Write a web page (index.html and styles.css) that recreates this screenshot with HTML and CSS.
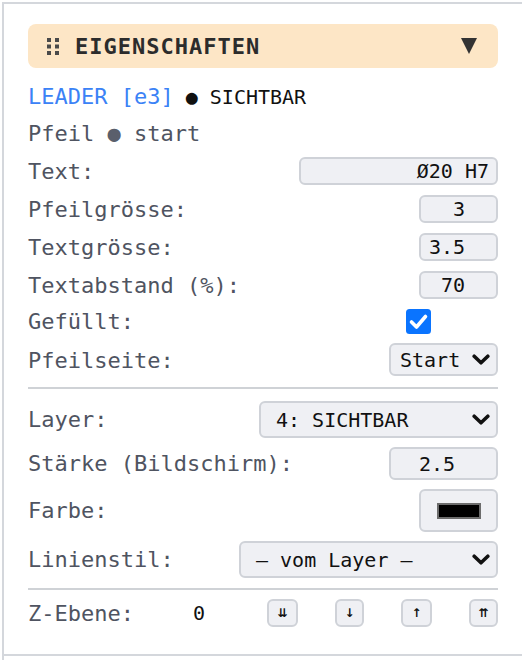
FILE: index.html
```html
<!DOCTYPE html>
<html lang="de">
<head>
<meta charset="utf-8">
<title>Eigenschaften</title>
<link rel="stylesheet" href="styles.css">
</head>
<body>
<div class="sidebar">
  <section class="panel">
    <header class="panel-head">
      <svg class="grip" width="12" height="17" viewBox="0 0 12 17" aria-hidden="true">
        <rect x="0" y="0" width="4" height="4"/><rect x="8" y="0" width="4" height="4"/>
        <rect x="0" y="6.5" width="4" height="4"/><rect x="8" y="6.5" width="4" height="4"/>
        <rect x="0" y="13" width="4" height="4"/><rect x="8" y="13" width="4" height="4"/>
      </svg>
      <h2 class="panel-title">EIGENSCHAFTEN</h2>
      <svg class="caret" width="16" height="16" viewBox="0 0 16 16" aria-hidden="true"><polygon points="0,0 16,0 8,16"/></svg>
    </header>

    <div class="group group-top">
      <div class="entity"><span class="entity-type">LEADER [e3]</span> <span class="entity-layer">● SICHTBAR</span></div>
      <div class="sub">Pfeil <span class="sub-dot">●</span> start</div>
      <div class="row"><span class="label">Text:</span><input class="field field-text" value="Ø20 H7"></div>
      <div class="row"><span class="label">Pfeilgrösse:</span><input class="field field-num" value="3"></div>
      <div class="row"><span class="label">Textgrösse:</span><input class="field field-num" value="3.5"></div>
      <div class="row"><span class="label">Textabstand (%):</span><input class="field field-num" value="70"></div>
      <div class="row row-check"><span class="label">Gefüllt:</span>
        <span class="check"><svg width="25" height="25" viewBox="0 0 25 25" aria-hidden="true"><rect width="25" height="25" rx="3.5" fill="#0a74ff"/><path d="M5.5 13 L10.5 18 L19.5 7.5" fill="none" stroke="#fff" stroke-width="3.6" stroke-linecap="round" stroke-linejoin="round"/></svg></span>
      </div>
      <div class="row"><span class="label">Pfeilseite:</span>
        <div class="select select-side"><span>Start</span><svg class="chev" width="18" height="11" viewBox="0 0 18 11" aria-hidden="true"><polyline points="2.2,2.2 9,8.8 15.8,2.2"/></svg></div>
      </div>
    </div>

    <hr class="divider divider-first">

    <div class="group group-mid">
      <div class="row"><span class="label">Layer:</span>
        <div class="select select-layer"><span>4: SICHTBAR</span><svg class="chev" width="18" height="11" viewBox="0 0 18 11" aria-hidden="true"><polyline points="2.2,2.2 9,8.8 15.8,2.2"/></svg></div>
      </div>
      <div class="row"><span class="label">Stärke (Bildschirm):</span><input class="field field-wide" value="2.5"></div>
      <div class="row"><span class="label">Farbe:</span><div class="color"><span class="swatch"></span></div></div>
      <div class="row"><span class="label">Linienstil:</span>
        <div class="select select-style"><span>— vom Layer —</span><svg class="chev" width="18" height="11" viewBox="0 0 18 11" aria-hidden="true"><polyline points="2.2,2.2 9,8.8 15.8,2.2"/></svg></div>
      </div>
    </div>

    <hr class="divider">

    <div class="row zrow">
      <span class="label">Z-Ebene:</span>
      <span class="zval">0</span>
      <div class="zbtns">
        <button class="zbtn zbtn-a">⇊</button>
        <button class="zbtn zbtn-b">↓</button>
        <button class="zbtn zbtn-a">↑</button>
        <button class="zbtn zbtn-b">⇈</button>
      </div>
    </div>
  </section>
</div>
</body>
</html>
```

FILE: styles.css
```css
html, body {
  margin: 0;
  padding: 0;
  background: #ffffff;
}

body {
  font-family: "DejaVu Sans Mono", "Liberation Mono", monospace;
  color: #111;
}

.sidebar {
  margin-left: 2px;
  border-left: 2px solid #d4d7dc;
  min-height: 660px;
}

.panel {
  margin-top: 2px;
  border-top: 2px solid #d4d7dc;
  border-bottom: 2px solid #d4d7dc;
  padding: 20px 24px 27px 24px;
}

.panel-head {
  display: flex;
  align-items: center;
  height: 44px;
  box-sizing: border-box;
  background: #fde6c6;
  border-radius: 8px;
  padding: 0 21px 0 19px;
}

.grip {
  fill: #4a4a4a;
  flex: none;
  margin-right: 16px;
}

.panel-title {
  margin: 0;
  font-size: 22px;
  font-weight: bold;
  letter-spacing: 1px;
  color: #2c2c2c;
  flex: 1;
}

.caret {
  fill: #333;
  flex: none;
}

.group {
  display: flex;
  flex-direction: column;
}

.group-top {
  margin-top: 16px;
  gap: 10px;
}

.group-mid {
  margin-top: 12px;
  gap: 9px;
}

.entity {
  height: 26px;
  line-height: 26px;
  font-size: 20px;
  color: #111;
  white-space: pre;
}

.entity-type {
  font-size: 22px;
  color: #3b82f6;
}

.sub {
  height: 26px;
  line-height: 26px;
  font-size: 22px;
  color: #4f5461;
  margin-top: 1px;
}

.sub-dot {
  color: #5a5f6c;
}

.row {
  display: flex;
  align-items: center;
  justify-content: space-between;
}

.label {
  font-size: 22px;
  color: #4f5461;
  white-space: pre;
}

.field {
  box-sizing: border-box;
  height: 28px;
  margin: 0;
  border: 2px solid #cfd2d8;
  border-radius: 6px;
  background: #eff0f4;
  font-family: "DejaVu Sans Mono", monospace;
  font-size: 20px;
  color: #111;
  text-align: right;
  padding: 0;
  outline: none;
}

.field-text {
  width: 199px;
  padding-right: 7px;
}

.field-num {
  width: 79px;
  padding-right: 31px;
}

.field-wide {
  width: 109px;
  height: 33px;
  padding-right: 41px;
}

.row-check {
  height: 25px;
}

.check {
  display: flex;
  margin-right: 67px;
}

.select {
  box-sizing: border-box;
  display: flex;
  align-items: center;
  justify-content: space-between;
  border: 2px solid #cfd2d8;
  border-radius: 6px;
  background: #eff0f4;
  font-size: 20px;
  color: #111;
  padding-right: 6px;
  white-space: pre;
}

.chev {
  fill: none;
  stroke: #111;
  stroke-width: 3.6;
  stroke-linecap: round;
  stroke-linejoin: round;
  flex: none;
}

.select-side {
  width: 109px;
  height: 33px;
  padding-left: 9px;
  margin-top: -1px;
}

.select-layer {
  width: 239px;
  height: 37px;
  padding-left: 15px;
}

.select-style {
  width: 259px;
  height: 37px;
  padding-left: 15px;
}

.color {
  box-sizing: border-box;
  width: 79px;
  height: 43px;
  border: 2px solid #cfd2d8;
  border-radius: 6px;
  background: #eff0f4;
  display: flex;
  align-items: center;
  justify-content: center;
}

.swatch {
  box-sizing: border-box;
  width: 44px;
  height: 16px;
  border: 2px solid #6c6c6c;
  background: #000;
}

.divider {
  margin: 10px 0 0 0;
  border: none;
  height: 2px;
  background: #cfd2d6;
}

.divider-first {
  margin-top: 11px;
}

.zrow {
  margin-top: 9px;
  justify-content: flex-start;
}

.zval {
  font-size: 20px;
  color: #111;
  margin-left: 59px;
}

.zbtns {
  margin-left: auto;
  display: flex;
  gap: 37px;
}

.zbtn {
  box-sizing: border-box;
  height: 28px;
  margin: 0;
  padding: 0;
  border: 2px solid #cfd2d8;
  border-radius: 6px;
  background: #eff0f4;
  font-family: "DejaVu Sans", sans-serif;
  font-size: 12px;
  font-weight: bold;
  color: #111;
  display: flex;
  align-items: center;
  justify-content: center;
}

.zbtn-a { width: 31px; }
.zbtn-b { width: 29px; }
```
